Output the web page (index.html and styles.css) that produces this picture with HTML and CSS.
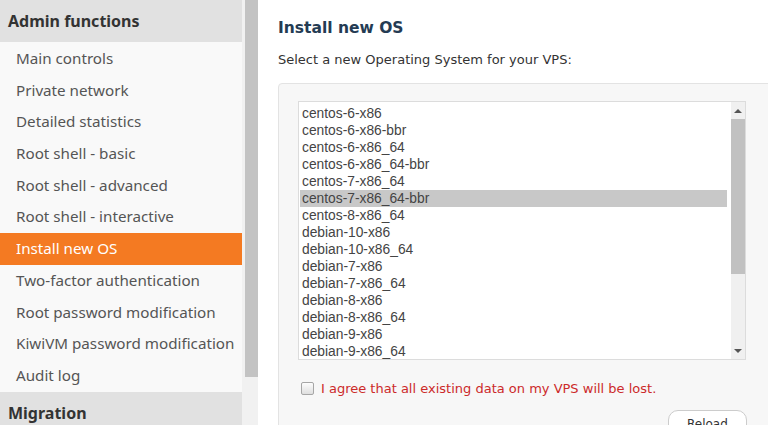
FILE: index.html
```html
<!DOCTYPE html>
<html>
<head>
<meta charset="utf-8">
<link rel="stylesheet" href="styles.css">
</head>
<body>
<div class="page">
  <nav class="sidebar">
    <div class="group-title">Admin functions</div>
    <ul class="menu">
      <li>Main controls</li>
      <li>Private network</li>
      <li>Detailed statistics</li>
      <li>Root shell - basic</li>
      <li>Root shell - advanced</li>
      <li>Root shell - interactive</li>
      <li class="active">Install new OS</li>
      <li>Two-factor authentication</li>
      <li>Root password modification</li>
      <li>KiwiVM password modification</li>
      <li>Audit log</li>
    </ul>
    <div class="group-title">Migration</div>
  </nav>
  <div class="side-scroll"><div class="side-thumb"></div></div>
  <main class="content">
    <h2 class="title">Install new OS</h2>
    <p class="lead">Select a new Operating System for your VPS:</p>
    <div class="panel">
      <div class="listbox">
        <ul class="options">
          <li>centos-6-x86</li>
          <li>centos-6-x86-bbr</li>
          <li>centos-6-x86_64</li>
          <li>centos-6-x86_64-bbr</li>
          <li>centos-7-x86_64</li>
          <li class="selected">centos-7-x86_64-bbr</li>
          <li>centos-8-x86_64</li>
          <li>debian-10-x86</li>
          <li>debian-10-x86_64</li>
          <li>debian-7-x86</li>
          <li>debian-7-x86_64</li>
          <li>debian-8-x86</li>
          <li>debian-8-x86_64</li>
          <li>debian-9-x86</li>
          <li>debian-9-x86_64</li>
          <li>ubuntu-16.04-x86_64</li>
        </ul>
        <div class="vscroll">
          <div class="arrow up"></div>
          <div class="track"><div class="thumb"></div></div>
          <div class="arrow down"></div>
        </div>
      </div>
      <label class="agree"><span class="box"></span><span>I agree that all existing data on my VPS will be lost.</span></label>
      <div class="actions"><button class="btn">Reload</button></div>
    </div>
  </main>
</div>
</body>
</html>
```

FILE: styles.css
```css
html, body {
  margin: 0;
  padding: 0;
  height: 425px;
  overflow: hidden;
  background: #ffffff;
}
.page {
  display: flex;
  height: 425px;
  overflow: hidden;
}
.sidebar {
  width: 242px;
  flex: none;
  background: #f9f9f9;
  font-family: "Noto Sans", "Open Sans", sans-serif;
}
.group-title {
  background: #e1e1e1;
  color: #333333;
  font-weight: bold;
  font-size: 16px;
  height: 42px;
  line-height: 42px;
  padding-left: 8px;
}
.menu {
  list-style: none;
  margin: 0;
  padding: 1px 0 0;
}
.menu li {
  height: 31.7px;
  line-height: 31.7px;
  padding-left: 16px;
  font-size: 15.2px;
  color: #555555;
  white-space: nowrap;
}
.menu li.active {
  background: #f47a22;
  color: #ffffff;
}
.side-scroll {
  width: 16px;
  flex: none;
  background: #f1f1f1;
  display: flex;
  justify-content: flex-end;
}
.side-thumb {
  width: 13px;
  height: 377px;
  background: #c3c3c3;
}
.content {
  flex: 1;
  min-width: 0;
  padding-left: 20px;
  font-family: "DejaVu Sans", Verdana, sans-serif;
}
.title {
  margin: 19px 0 0;
  font-size: 15.5px;
  font-weight: bold;
  color: #243b53;
  line-height: 19px;
}
.lead {
  margin: 14px 0 0;
  font-size: 13px;
  color: #333333;
  line-height: 16px;
}
.panel {
  margin-top: 15px;
  width: 520px;
  background: #f7f7f7;
  border: 1px solid #e3e3e3;
  border-radius: 4px;
  padding: 17px 0 0 19px;
  height: 400px;
}
.listbox {
  width: 448px;
  height: 259px;
  box-sizing: border-box;
  border: 1px solid #dcdcdc;
  background: #ffffff;
  display: flex;
  overflow: hidden;
}
.options {
  flex: 1;
  list-style: none;
  margin: 0;
  padding: 3px 0 0 1px;
  font-family: "Liberation Sans", Arial, sans-serif;
  font-size: 13.8px;
  color: #444444;
  overflow: hidden;
}
.options li {
  height: 17px;
  line-height: 17px;
  padding-left: 2px;
  margin-right: 4px;
}
.options li.selected {
  background: #c8c8c8;
}
.vscroll {
  width: 14px;
  flex: none;
  display: flex;
  flex-direction: column;
  background: #f0f0f0;
}
.arrow {
  height: 17px;
  display: flex;
  align-items: center;
  justify-content: center;
}
.arrow::before {
  content: "";
  border-left: 4px solid transparent;
  border-right: 4px solid transparent;
}
.arrow.up::before {
  border-bottom: 4px solid #555555;
}
.arrow.down::before {
  border-top: 4px solid #555555;
}
.track {
  flex: 1;
}
.thumb {
  height: 155px;
  background: #c1c1c1;
}
.agree {
  display: flex;
  align-items: center;
  gap: 7px;
  margin: 21px 0 0 3px;
  font-size: 13px;
  color: #cc2a2a;
}
.box {
  width: 11px;
  height: 11px;
  border: 1px solid #a6a6a6;
  border-radius: 2px;
  background: linear-gradient(#fdfdfd, #dedede);
}
.actions {
  padding: 14px 0 0 370px;
}
.btn {
  font-family: "DejaVu Sans", Verdana, sans-serif;
  font-size: 12px;
  color: #333333;
  background: #ffffff;
  border: 1px solid #cccccc;
  border-radius: 10px;
  padding: 6px 18px;
}
```
